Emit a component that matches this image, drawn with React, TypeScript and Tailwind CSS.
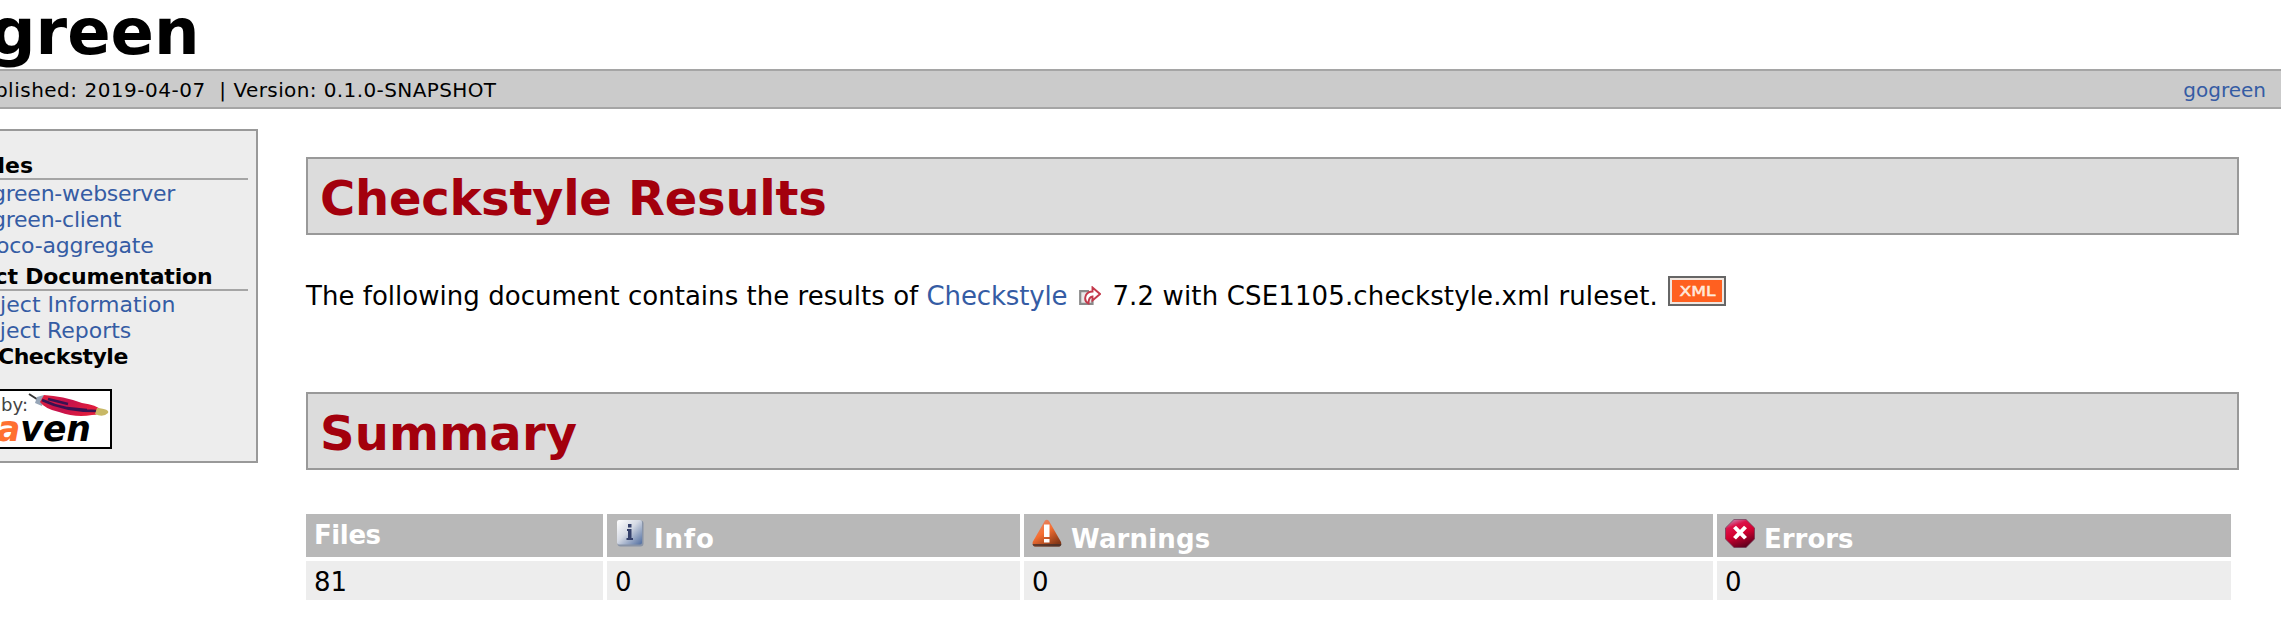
import React from "react";

function InfoIcon() {
  return (
    <svg className="block h-7 w-[29px]" viewBox="0 0 29 28">
      <defs>
        <linearGradient id="info" x1="0" y1="0" x2="1" y2="1">
          <stop offset="0" stopColor="#ffffff" />
          <stop offset=".45" stopColor="#d5dae4" />
          <stop offset="1" stopColor="#4f6c9f" />
        </linearGradient>
      </defs>
      <rect x="1.500" y="1.500" width="26" height="26" rx="3" fill="#7585a0" opacity=".7" />
      <rect x="1" y="1" width="25" height="24.500" rx="2" fill="url(#info)" />
      <path d="M12 5h3.500v3.500h-3.500zM11 10h4.500v9h1.500v2h-6.500v-2h1.500v-7h-1z" fill="#34406a" />
    </svg>
  );
}

function WarningIcon() {
  return (
    <svg className="block h-7 w-[30px]" viewBox="0 0 30 28">
      <defs>
        <linearGradient id="warn" x1="0" y1="0" x2=".7" y2="1">
          <stop offset="0" stopColor="#d88e80" />
          <stop offset=".5" stopColor="#f76f32" />
          <stop offset="1" stopColor="#843716" />
        </linearGradient>
      </defs>
      <path d="M13 1.500Q15 0 17 2L29 23Q30 26 27.500 27.500H2.500Q0 26 .700 23Z" fill="url(#warn)" />
      <path d="M.500 25H29.500Q29 27.500 27 27.500H3Q1 27.500 .500 25Z" fill="#40302e" opacity=".75" />
      <path d="M12 5.500h5.500V18h-5.500zM12 20h5.500v3.500h-5.500z" fill="#fff" />
    </svg>
  );
}

function ErrorIcon() {
  return (
    <svg className="block h-[29px] w-[30px]" viewBox="0 0 30 31" preserveAspectRatio="none">
      <defs>
        <linearGradient id="err" x1=".3" y1="0" x2=".7" y2="1">
          <stop offset="0" stopColor="#c97aa8" />
          <stop offset=".2" stopColor="#dc1048" />
          <stop offset=".5" stopColor="#d40030" />
          <stop offset="1" stopColor="#55001c" />
        </linearGradient>
      </defs>
      <path d="M9 .500h12l8.500 9v12l-8.500 9H9L.500 21.500v-12Z" fill="url(#err)" stroke="#6b3450" strokeOpacity=".7" />
      <path d="M9.500 8.500l11 12M20.500 8.500l-11 12" stroke="#fff" strokeWidth="4" />
    </svg>
  );
}

function ExternalIcon() {
  return (
    <svg className="block h-5 w-[22px]" viewBox="0 0 22 20">
      <path d="M10 5.200H1.200v12.600H13.500v-4" fill="#e8e8e8" stroke="#8a8a8a" strokeWidth="2.200" />
      <path d="M13.500 1.500L21 8L13.500 14.500v-4Q9.500 11 9.500 17.500Q4.500 15 7 9Q9 5.500 13.500 5.500Z" fill="#fff" stroke="#c4394b" strokeWidth="1.900" />
    </svg>
  );
}

function XmlBadge() {
  return (
    <svg className="block h-[30px] w-[58px]" viewBox="0 0 58 30">
      <rect width="58" height="30" fill="#666" />
      <rect x="2" y="2" width="54" height="26" fill="#efe6e0" />
      <rect x="4" y="4" width="50" height="22" fill="#ff6020" />
      <text x="11.500" y="20" textLength="36" lengthAdjust="spacingAndGlyphs" fontFamily="DejaVu Sans" fontSize="14" fill="#ffe9dc" stroke="#ffe9dc" strokeWidth=".5">XML</text>
    </svg>
  );
}

function MavenLogo() {
  return (
    <svg className="block h-[60px] w-[180px]" viewBox="0 0 180 60">
      <defs>
        <linearGradient id="feather" x1="0" y1="0" x2="1" y2=".3">
          <stop offset="0" stopColor="#e0203c" />
          <stop offset=".5" stopColor="#c5124c" />
          <stop offset="1" stopColor="#e21d3c" />
        </linearGradient>
      </defs>
      <rect x="1" y="1" width="178" height="58" fill="#fff" stroke="#000" strokeWidth="2" />
      <text x="69" y="22" textLength="27" lengthAdjust="spacingAndGlyphs" fontFamily="DejaVu Sans" fontSize="18" fill="#444">by:</text>
      <text x="65" y="52" textLength="94" lengthAdjust="spacingAndGlyphs" fontFamily="DejaVu Sans" fontSize="35" fontWeight="bold" fontStyle="italic"><tspan fill="#ff7030">a</tspan><tspan fill="#000">ven</tspan></text>
      <path d="M97 5L111 14" stroke="#333" strokeWidth="2" />
      <path d="M105 8L112 6L110 17L103 14Z" fill="#97a6b8" />
      <path d="M112 6Q131 7 150 14Q165 16 169 21Q168 26 160 26Q144 29 127 23Q113 20 108 13Z" fill="url(#feather)" />
      <path d="M110 11Q133 22 164 22M116 10L136 15M135 19L155 21" fill="none" stroke="#3a1252" strokeWidth="2.500" />
      <path d="M165 19Q178 20 176 24Q171 29 163 25Z" fill="#c8b866" />
    </svg>
  );
}

const columns = [
  { label: "Files", value: "81", icon: null, head: "pl-[8px] leading-[42px] tracking-[-0.4px]" },
  { label: "Info", value: "0", icon: <InfoIcon />, head: "pl-[9px] leading-[50px] tracking-[0.8px]" },
  { label: "Warnings", value: "0", icon: <WarningIcon />, head: "pl-[8px] leading-[50px] tracking-[0.15px]" },
  { label: "Errors", value: "0", icon: <ErrorIcon />, head: "pl-[8px] leading-[50px]" },
];

function SectionHeading({ children }: { children: React.ReactNode }) {
  return (
    <h2 className="h-[78px] w-[1933px] border-2 border-[#999] bg-[#dcdcdc] pl-3 text-[48px] leading-[78px] font-bold text-[#a3000d]">
      {children}
    </h2>
  );
}

export default function App() {
  return (
    <div className="h-[627px] overflow-hidden bg-white font-['Verdana','DejaVu_Sans',sans-serif] text-black">
      <h1 className="-ml-[100px] h-[69px] text-[64px] leading-[64px] font-bold whitespace-nowrap">gogreen</h1>
      <div className="flex h-10 items-center justify-between border-y-2 border-[#a5a5a5] bg-[#cbcbcb] pr-[15px] text-[20px] leading-9">
        <div className="-ml-[81px] pt-px whitespace-pre">
          <span className="tracking-[0.5px]">Last Published: 2019-04-07&nbsp; | </span>
          <span className="tracking-[0.4px]">Version: 0.1.0-SNAPSHOT</span>
        </div>
        <a className="pt-px text-[#355ca4]">gogreen</a>
      </div>
      <div className="flex items-start">
        <nav className="mt-5 flex h-[334px] w-[258px] shrink-0 flex-col overflow-hidden border-y-2 border-r-2 border-[#999] bg-[#ededed] pt-[21px] pr-2 text-[22px] leading-[26px] whitespace-nowrap text-[#355ca4]">
          <h5 className="h-7 border-b-2 border-[#a5a5a5] leading-7 font-bold text-black"><span className="-ml-[71px]">Modules</span></h5>
          <a className="-ml-[35px] pt-px tracking-[-0.23px]">gogreen-webserver</a>
          <a className="-ml-[35px] tracking-[-0.23px]">gogreen-client</a>
          <a className="-ml-[35px] tracking-[-0.23px]">jacoco-aggregate</a>
          <h5 className="mt-[4px] h-7 border-b-2 border-[#a5a5a5] leading-7 font-bold text-black"><span className="-ml-[69px] tracking-[-0.2px]">Project Documentation</span></h5>
          <a className="-ml-[35px] pt-px tracking-[0.04px]">Project Information</a>
          <a className="-ml-[35px] tracking-[-0.03px]">Project Reports</a>
          <b className="-ml-[2px] tracking-[-0.5px] text-black">Checkstyle</b>
          <div className="mt-[19px] -ml-[68px]"><MavenLogo /></div>
        </nav>
        <main className="mt-12 ml-12">
          <SectionHeading><span className="tracking-[-0.25px]">Checkstyle Results</span></SectionHeading>
          <p className="mt-[41px] flex h-10 items-center text-[26px] leading-10 whitespace-pre">
            <span className="tracking-[0.03px]">The following document contains the results of </span>
            <a className="tracking-[-0.15px] text-[#355ca4]">Checkstyle</a>
            <span className="ml-3"><ExternalIcon /></span>
            <span className="ml-[11px] tracking-[0.14px]">7.2 with CSE1105.checkstyle.xml ruleset.</span>
            <span className="-mt-[11px] ml-[10px]"><XmlBadge /></span>
          </p>
          <div className="h-[76px]" />
          <SectionHeading><span className="tracking-[0.15px]">Summary</span></SectionHeading>
          <div className="mt-11 grid w-[1925px] grid-cols-[297px_413px_689px_514px] gap-1 text-[26px]">
            {columns.map((c) => (
              <div key={c.label} className={`flex h-[43px] bg-[#b8b8b8] font-bold text-white ${c.head}`}>
                {c.icon ? <span className="mt-[5px] mr-[9px]">{c.icon}</span> : null}
                <span>{c.label}</span>
              </div>
            ))}
            {columns.map((c) => (
              <div key={c.label} className="h-[39px] bg-[#ededed] pl-2 leading-[43px]">{c.value}</div>
            ))}
          </div>
        </main>
      </div>
    </div>
  );
}
